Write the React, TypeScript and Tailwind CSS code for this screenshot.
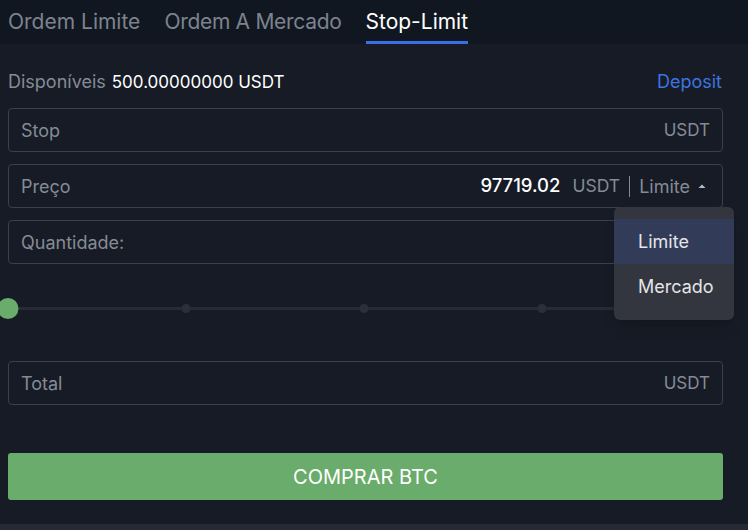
import { useState } from "react";

const tabs = ["Ordem Limite", "Ordem A Mercado", "Stop-Limit"];

function Field({ label, className = "mt-3", children }: { label: string; className?: string; children?: React.ReactNode }) {
  return (
    <div className={`relative flex h-[44px] items-center rounded border border-[#3b404b] px-3 text-[18px] ${className}`}>
      <span className="text-[#858b96]">{label}</span>
      <div className="ml-auto flex items-center">{children}</div>
    </div>
  );
}

export default function App() {
  const [active] = useState(2);
  return (
    <div className="flex min-h-[530px] w-full flex-col bg-[#161b25] font-['Inter',sans-serif]">
      <div className="flex h-[44px] gap-[24px] bg-[#111720] px-2">
        {tabs.map((t, i) => (
          <div
            key={t}
            className={`flex items-center border-b-[3px] pt-[3px] text-[21px] ${i === 1 ? "tracking-[-0.3px]" : ""} ${
              i === active ? "border-[#3b6ee6] text-white" : "border-transparent text-[#7d838e]"
            }`}
          >
            {t}
          </div>
        ))}
      </div>

      <div className="flex flex-1 flex-col pb-6 pl-2 pr-[25px]">
        <div className="mt-[26px] flex h-6 items-center text-[18px] leading-6">
          <span className="text-[#858b96]">Disponíveis</span>
          <span className="ml-[6px] text-[17px] text-white">500.00000000 USDT</span>
          <span className="ml-auto mr-[1px] text-[#3d74e3]">Deposit</span>
        </div>

        <Field label="Stop" className="mt-[14px]">
          <span className="pt-[1px] text-[17px] text-[#858b96]">USDT</span>
        </Field>

        <Field label="Preço">
          <span className="text-[18.5px] font-medium text-white">97719.02</span>
          <span className="ml-3 text-[17.5px] text-[#858b96]">USDT</span>
          <span className="mx-[9px] h-[21px] w-px bg-[#858b96]" />
          <span className="text-[#858b96]">Limite</span>
          <svg width="10" height="6" viewBox="0 0 10 6" className="ml-[7px] mr-[3px]">
            <path d="M1.5 5L5 1.5 8.5 5Z" fill="#b6bbc4" />
          </svg>
          <div className="absolute right-[-12px] top-[42px] z-10 w-[120px] rounded-md bg-[#33363e] pb-[11px] pt-3 shadow-lg">
            <div className="flex h-[45px] items-center bg-[#323c59] px-6 text-[#e3e5e9]">Limite</div>
            <div className="flex h-[45px] items-center px-6 text-[#e3e5e9]">Mercado</div>
          </div>
        </Field>

        <Field label="Quantidade:" />

        <div className="relative mr-[3px] mt-[34px] flex h-[21px] items-center">
          <div className="h-[3px] w-full bg-[#262b36]" />
          <span className="absolute left-0 top-0 h-[21px] w-[21px] -translate-x-1/2 rounded-full bg-[#6aac6b]" />
          <span className="absolute left-1/4 top-[6px] h-[9px] w-[9px] -translate-x-1/2 rounded-full bg-[#2a2f3a]" />
          <span className="absolute left-1/2 top-[6px] h-[9px] w-[9px] -translate-x-1/2 rounded-full bg-[#2a2f3a]" />
          <span className="absolute left-3/4 top-[6px] h-[9px] w-[9px] -translate-x-1/2 rounded-full bg-[#2a2f3a]" />
          <span className="absolute left-full top-[6px] h-[9px] w-[9px] -translate-x-1/2 rounded-full bg-[#2a2f3a]" />
        </div>

        <Field label="Total" className="mt-[42px]">
          <span className="pt-[1px] text-[17px] text-[#858b96]">USDT</span>
        </Field>

        <button className="mt-12 h-[47px] w-full rounded-[3px] bg-[#6aac6b] text-[20px] text-white">
          COMPRAR BTC
        </button>
      </div>
      <div className="h-[6px] bg-[#262a34]" />
    </div>
  );
}
